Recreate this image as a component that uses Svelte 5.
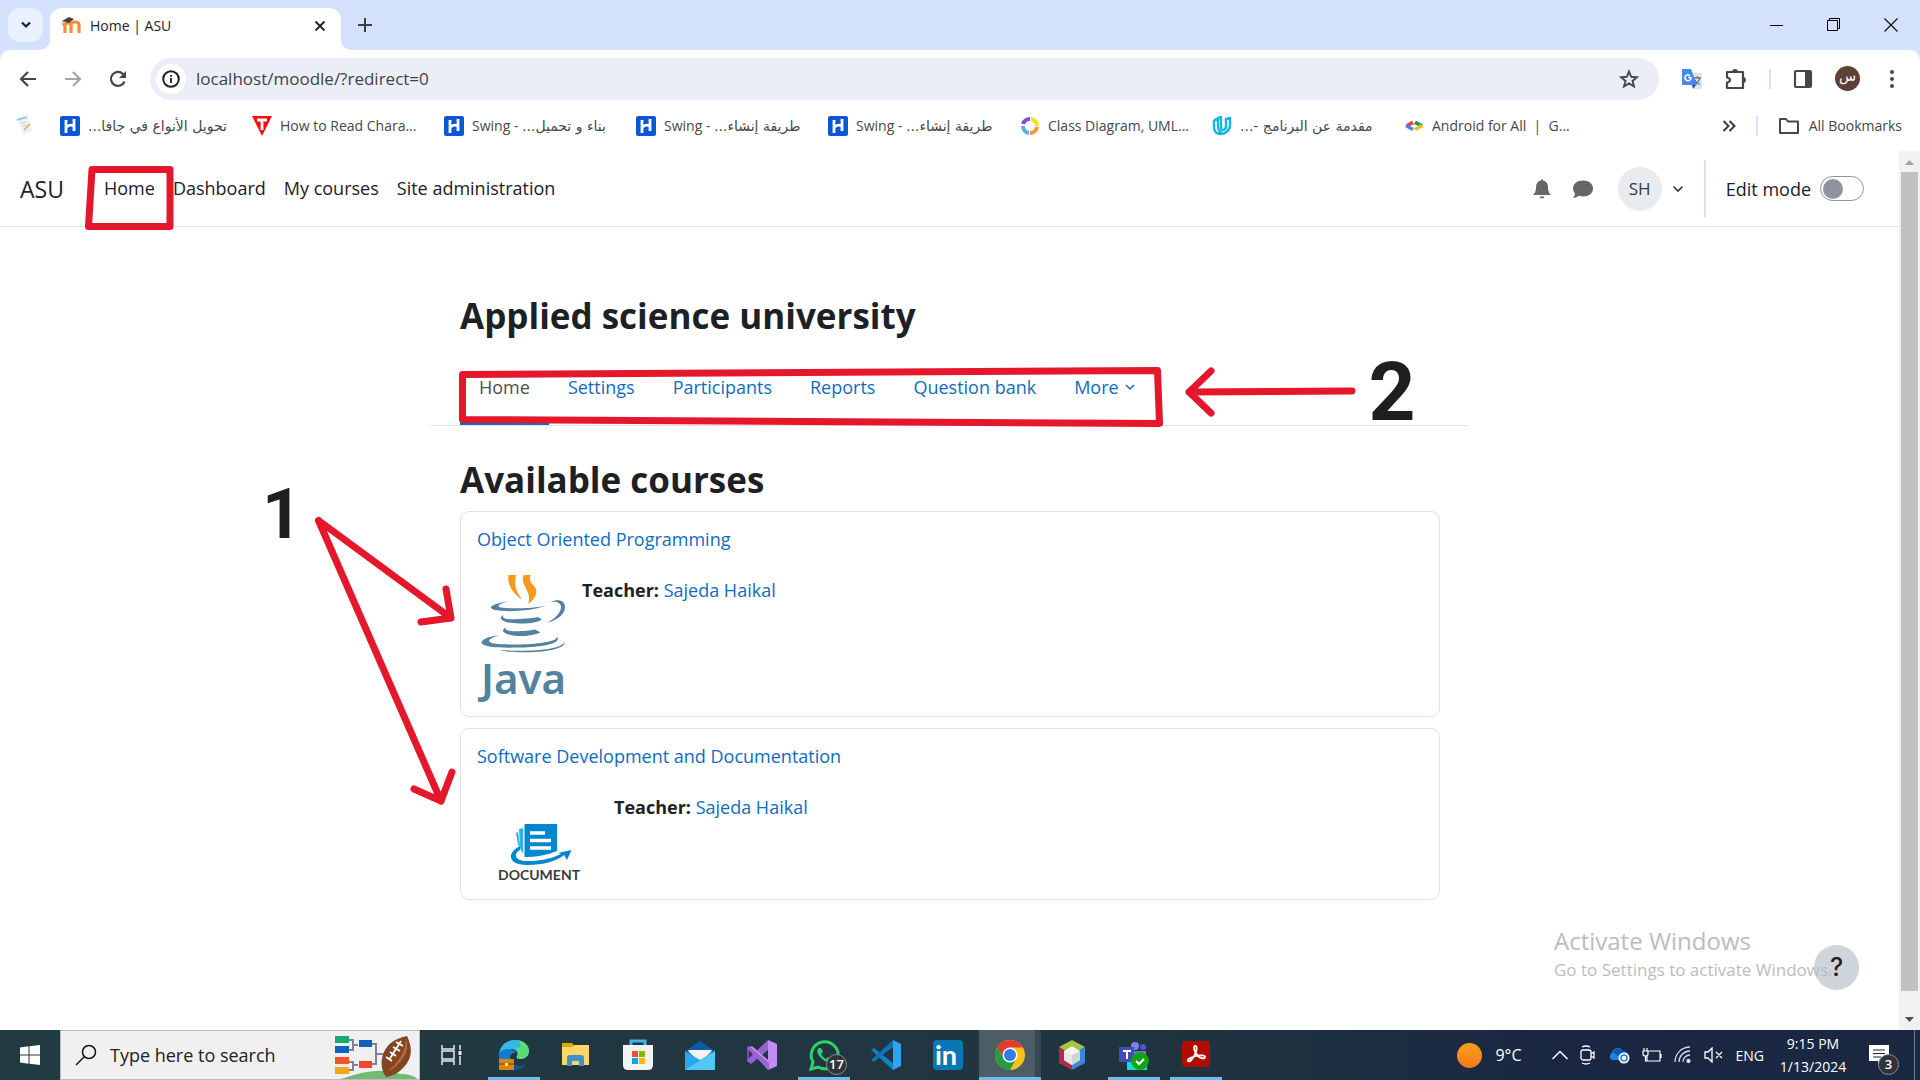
<script>
  const bookmarks = [
    { icon: 'h', rtl: 'تحويل الأنواع في جافا...' },
    { icon: 't', text: 'How to Read Chara...' },
    { icon: 'h', text: 'Swing - ', rtl: 'بناء و تحميل...' },
    { icon: 'h', text: 'Swing - ', rtl: 'طريقة إنشاء...' },
    { icon: 'h', text: 'Swing - ', rtl: 'طريقة إنشاء...' },
    { icon: 'ring', text: 'Class Diagram, UML...' },
    { icon: 'u', rtl: 'مقدمة عن البرنامج -...' },
    { icon: 'code', text: 'Android for All  |  G...' }
  ];
  const siteLinks = ['Home', 'Dashboard', 'My courses', 'Site administration'];
  const tabs = ['Home', 'Settings', 'Participants', 'Reports', 'Question bank'];
  const apps = [
    { name: 'Edge', open: true },
    { name: 'Files' },
    { name: 'Store' },
    { name: 'Mail' },
    { name: 'Visual Studio' },
    { name: 'WhatsApp', open: true },
    { name: 'VS Code' },
    { name: 'LinkedIn' },
    { name: 'Chrome', open: true, active: true },
    { name: 'NetBeans' },
    { name: 'Teams', open: true },
    { name: 'Acrobat', open: true }
  ];
  let editMode = $state(false);
  let address = $state('localhost/moodle/?redirect=0');
  let query = $state('');
</script>

{#snippet bookmarkIcon(kind)}
  <svg width="20" height="20" viewBox="0 0 20 20" aria-hidden="true">
    {#if kind === 'h'}
      <rect width="20" height="20" rx="2" fill="#0a56d8" />
      <path d="M6 4v13M14 3v12M6 11.500C9 8.500 11 8.500 14 10" fill="none" stroke="#fff" stroke-width="2.800" />
    {:else if kind === 't'}
      <path d="M0 0h20L10 20z" fill="#fb0d0d" />
      <path d="M5 4h10M10 4v10" stroke="#fff" stroke-width="2.800" />
    {:else if kind === 'ring'}
      <g fill="none" stroke-width="4">
        <path d="M10 3a7 7 0 0 0-7 5" stroke="#7a4fd0" />
        <path d="M11 3a7 7 0 0 1 6 7" stroke="#fbdc2c" />
        <path d="M17 11a7 7 0 0 1-7 6" stroke="#f09a2c" />
        <path d="M3 10a7 7 0 0 0 6 7" stroke="#55b2e4" />
      </g>
    {:else if kind === 'u'}
      <path d="M2 4v6c0 5 2 8 6 8 5 0 10-3 10-9V2l-4 1v7c0 3-1 4-3 4s-2-1-2-4V1L6 2v8c0 4 1 6 4 7M2 4l4-1" fill="none" stroke="#17b5e4" stroke-width="2.400" />
    {:else if kind === 'code'}
      <path d="M9 6.500L3 10" stroke="#ea4335" stroke-width="4" />
      <path d="M2 9.500l7 4" stroke="#4285f4" stroke-width="3.500" />
      <path d="M11 6.500l7 3.500" stroke="#0f9d58" stroke-width="4" />
      <path d="M18 9.500l-7 4" stroke="#fbbc04" stroke-width="3.500" />
      <path d="M9 8.500L6 10l3 1.500zM11 8.500l3 1.500-3 1.500z" fill="#fff" />
    {/if}
  </svg>
{/snippet}

{#snippet appIcon(name)}
  <svg class="glyph" width="32" height="32" viewBox="0 0 32 32" aria-hidden="true">
    {#if name === 'Edge'}
      <path d="M1 15C2 6 9 1 17 1c8 0 14 5 14 11 0 5-4 8-9 8-3 0-4-1-3-3 2-3-1-7-6-7-6 0-10 2-12 5z" fill="#36b8e8" />
      <path d="M19 1c7 1 12 5 12 11 0 5-4 8-9 8-3 0-4-1-3-3 2-3 0-6-2-7 6-1 8-5 2-9z" fill="#5ddb74" />
      <path d="M1 15C3 9 16 8 18 14c-5-1-7 4-5 8 3 6 11 7 15 2-3 5-7 7-12 7C7 31 0 24 1 15z" fill="#1479d1" />
      <path d="M13 22c3 6 11 7 15 2-3 5-7 7-12 7-3-2-4-6-3-9z" fill="#0e529c" />
      <rect x="1" y="20" width="15" height="11" fill="#d98411" />
      <path d="M1 25h15" stroke="#7a4104" />
      <rect x="7" y="24" width="3" height="3" fill="#ffe07a" />
    {:else if name === 'Files'}
      <path d="M2 4h10l3 3h13v4H2z" fill="#e4a50b" />
      <path d="M2 8h10l3-2h14v20H2z" fill="#ffd667" />
      <path d="M7 27V19q0-3 3-3h11q3 0 3 3v8h-5v-5h-7v5z" fill="#3f8fd2" />
    {:else if name === 'Store'}
      <path d="M9 6V2h14v4" fill="none" stroke="#3fb4f0" stroke-width="3" />
      <path d="M1 6h30v20q0 5-5 5H6q-5 0-5-5z" fill="#f2f2f2" />
      <path d="M10 12h6v6h-6z" fill="#f25022" />
      <path d="M17 12h6v6h-6z" fill="#7fba00" />
      <path d="M10 19h6v6h-6z" fill="#00a4ef" />
      <path d="M17 19h6v6h-6z" fill="#ffb900" />
    {:else if name === 'Mail'}
      <path d="M1 12L16 2l15 10v3H1z" fill="#0d5aa7" />
      <path d="M4 12h24L16 24z" fill="#f4f4f4" />
      <path d="M1 12l15 9 15-9v19H1z" fill="#2ba8ea" />
      <path d="M1 31l30-19v19z" fill="#53c8f6" />
      <path d="M4 11h24l-12 9z" fill="#f4f4f4" />
    {:else if name === 'Visual Studio'}
      <path d="M1 9l4-2 18 17v7L3 12v11l-2-1z" fill="#7b4bb5" />
      <path d="M1 22l4 3L22 11V1L3 19z" fill="#9563cf" />
      <path d="M22 1l9 4v22l-9 4L3 9l3-2 16 14z" fill="#c48cf3" />
      <path d="M3 7l20 17v7L1 9z" fill="#9a63d0" />
    {:else if name === 'WhatsApp'}
      <path d="M3 30l2-7a13.500 13.500 0 1 1 5 5z" fill="none" stroke="#2bd366" stroke-width="3" />
      <path d="M11 9c-3 2-2 6 2 10s9 6 11 2l-4-3-2 2c-2-1-4-3-5-5l2-2-2-4z" fill="#2bd366" />
    {:else if name === 'VS Code'}
      <path d="M1 11l3-2 19 15v7z" fill="#1181c8" />
      <path d="M1 21l3 2L23 8V1z" fill="#0f72b5" />
      <path d="M23 1l8 4v22l-8 4z" fill="#2ba6f2" />
    {:else if name === 'LinkedIn'}
      <rect x="1" y="1" width="30" height="30" rx="4" fill="#0a77b5" />
      <text x="3" y="26" class="linkedin">in</text>
    {:else if name === 'Chrome'}
      <circle cx="16" cy="16" r="15" fill="#fbc116" />
      <path d="M3 8.500A15 15 0 0 1 29 8.500H16L9 18z" fill="#e33b2e" />
      <path d="M3 8.500A15 15 0 0 0 16 31l6-11-12-1z" fill="#2a9a48" />
      <circle cx="16" cy="16" r="7.500" fill="#fff" />
      <circle cx="16" cy="16" r="6" fill="#2f7de9" />
    {:else if name === 'NetBeans'}
      <path d="M16 1l13 7-13 8L3 8z" fill="#a9c23f" />
      <path d="M3 8l13 8v15L3 24z" fill="#b22a50" />
      <path d="M29 8l-13 8v15l13-7z" fill="#3f86d0" />
      <path d="M16 7l8 5v9l-8 5-8-5v-9z" fill="#f4f6f0" />
      <path d="M16 16l8-4v9l-8 5z" fill="#cfd4d6" />
      <path d="M16 16l-8-4v9l8 5z" fill="#e6e8e6" />
    {:else if name === 'Teams'}
      <circle cx="17" cy="7" r="4" fill="#7b83eb" />
      <circle cx="25" cy="8" r="3" fill="#5059c9" />
      <path d="M10 12h18v10q-3 6-9 6t-9-6z" fill="#6f76df" />
      <rect x="1" y="8" width="15" height="15" fill="#444bbb" />
      <path d="M5 12h8M9 12v8" stroke="#fff" stroke-width="2" />
      <rect x="9" y="23" width="20" height="8" fill="#19d8d8" />
      <circle cx="22" cy="22" r="9" fill="#14a312" />
      <path d="M18 22l3 3 5-5" fill="none" stroke="#fff" stroke-width="2" />
    {:else}
      <rect x="2" y="2" width="28" height="26" rx="4" fill="#b30b00" />
      <path d="M15 7c-2 0-1 6 3 10 3 3 7 3 7 1s-5-2-9-1-9 3-8 5c2 2 6-4 8-9 1-4 1-6-1-6z" fill="none" stroke="#fff" stroke-width="1.800" />
    {/if}
  </svg>
{/snippet}

<div class="screen">
  <header class="browser">
    <div class="tabstrip">
      <button class="tabsearch" aria-label="Search tabs">
        <svg width="12" height="12" viewBox="0 0 12 12"><path d="M2 3.500l4 4 4-4" fill="none" stroke="#1f1f1f" stroke-width="2.200" /></svg>
      </button>
      <div class="tab">
        <svg class="flare left" width="12" height="12" viewBox="0 0 12 12"><path d="M12 0v12H0Q12 12 12 0z" fill="#fff" /></svg>
        <svg width="20" height="20" viewBox="0 0 20 20">
          <path d="M4 17V9q0-2 3-2t3 2v8M10 9q0-3 4-3t4 3v8" fill="none" stroke="#f68b32" stroke-width="3.200" />
          <path d="M1 5l7-4 5 2-5 4z" fill="#46423f" />
          <path d="M2 5v5" stroke="#8d8580" />
        </svg>
        <span class="tabtitle">Home | ASU</span>
        <button class="plain" aria-label="Close tab">
          <svg width="12" height="12" viewBox="0 0 12 12"><path d="M1.500 1.500l9 9M10.500 1.500l-9 9" stroke="#1f1f1f" stroke-width="1.800" /></svg>
        </button>
        <svg class="flare right" width="12" height="12" viewBox="0 0 12 12"><path d="M0 0v12h12Q0 12 0 0z" fill="#fff" /></svg>
      </div>
      <button class="plain newtab" aria-label="New tab">
        <svg width="14" height="14" viewBox="0 0 14 14"><path d="M7 0v14M0 7h14" stroke="#3c4043" stroke-width="2" /></svg>
      </button>
      <div class="windowctl">
        <button class="plain" aria-label="Minimize"><svg width="14" height="14" viewBox="0 0 14 14"><path d="M0 7.500h13" stroke="#000" /></svg></button>
        <button class="plain" aria-label="Restore"><svg width="14" height="14" viewBox="0 0 14 14"><path d="M.5 2.500h10v10H.5zM2.500 2.500V.5h10v10h-2" fill="none" stroke="#000" /></svg></button>
        <button class="plain" aria-label="Close"><svg width="14" height="14" viewBox="0 0 14 14"><path d="M.5.5l13 13M13.500.5l-13 13" stroke="#111" stroke-width="1.200" /></svg></button>
      </div>
    </div>

    <div class="toolbar">
      <button class="plain tool" aria-label="Back"><svg width="18" height="18" viewBox="0 0 18 18"><path d="M17 9H2M9 2L2 9l7 7" fill="none" stroke="#474747" stroke-width="2.200" /></svg></button>
      <button class="plain tool" aria-label="Forward"><svg width="18" height="18" viewBox="0 0 18 18"><path d="M1 9h15M9 2l7 7-7 7" fill="none" stroke="#a5a5a5" stroke-width="2.200" /></svg></button>
      <button class="plain tool" aria-label="Reload"><svg width="18" height="18" viewBox="0 0 18 18"><path d="M15.500 11.500A7 7 0 1 1 14 4l1.500 2" fill="none" stroke="#474747" stroke-width="2.200" /><path d="M17 1v7h-7z" fill="#474747" /></svg></button>
      <div class="omnibox">
        <button class="siteinfo" aria-label="Site information">
          <svg width="18" height="18" viewBox="0 0 18 18"><circle cx="9" cy="9" r="7.800" fill="none" stroke="#1f1f1f" stroke-width="2" /><path d="M9 8v5M9 5v1.800" stroke="#1f1f1f" stroke-width="1.800" /></svg>
        </button>
        <input class="address" aria-label="Address" bind:value={address} />
        <button class="plain" aria-label="Bookmark this page"><svg width="20" height="20" viewBox="0 0 20 20"><path d="M10 2.500l2.200 5.300 5.800.4-4.500 3.700 1.500 5.600-5-3.100-5 3.100 1.500-5.600L2 8.200l5.800-.4z" fill="none" stroke="#474747" stroke-width="1.900" /></svg></button>
      </div>
      <div class="extensions">
        <button class="plain" aria-label="Translate">
          <svg width="22" height="22" viewBox="0 0 22 22"><path d="M9 5h12v16H13z" fill="#e2e3e6" /><path d="M13 10h7M16.500 8v2M19 10q-2 5-5 6M14 12q2 4 5 4" fill="none" stroke="#647b86" stroke-width="1.300" /><path d="M11 17h4l-3 4z" fill="#3b3fb5" /><path d="M1 1h9l6 16H2q-1 0-1-1z" fill="#4587f3" /><path d="M9 7.500A3 3 0 1 0 10 9.500H7" fill="none" stroke="#fff" stroke-width="1.600" /></svg>
        </button>
        <button class="plain" aria-label="Extensions">
          <svg width="22" height="22" viewBox="0 0 22 22"><path d="M2 4h16v16H2v-5.500q3-.5 3-2.500T2 9.500z" fill="none" stroke="#474747" stroke-width="2.200" stroke-linejoin="round" /><path d="M7 4a3 3 0 0 1 6 0zM18 9a3 3 0 0 1 0 6z" fill="#474747" /></svg>
        </button>
        <span class="bar"></span>
        <button class="plain" aria-label="Side panel"><svg width="20" height="20" viewBox="0 0 20 20"><rect x="2" y="2" width="16" height="16" rx="1" fill="none" stroke="#474747" stroke-width="2.200" /><path d="M12 2h6v16h-6z" fill="#474747" /></svg></button>
        <button class="profile" aria-label="Profile">س</button>
        <button class="plain" aria-label="Menu"><svg width="20" height="20" viewBox="0 0 20 20" fill="#474747"><circle cx="10" cy="3" r="2" /><circle cx="10" cy="10" r="2" /><circle cx="10" cy="17" r="2" /></svg></button>
      </div>
    </div>

    <nav class="bookmarks" aria-label="Bookmarks">
      <a class="bare" href="#notes" aria-label="Notes">
        <svg width="20" height="20" viewBox="0 0 20 20"><path d="M3 5l11-3 3 13-9 4z" fill="#eef0f1" /><path d="M2 4l10-3" stroke="#8dcbe8" stroke-width="2" /><path d="M9 14l6-6" stroke="#c9ab74" stroke-width="1.500" /><path d="M6 7l5-1M7 10l4-1" stroke="#c5cbd0" /></svg>
      </a>
      {#each bookmarks as b}
        <a class="bookmark" href="#bookmark">
          {@render bookmarkIcon(b.icon)}
          <span class="label">{b.text ?? ''}{#if b.rtl}<bdi class="arabic" dir="rtl">{b.rtl}</bdi>{/if}</span>
        </a>
      {/each}
      <div class="morebooks">
        <button class="plain" aria-label="More bookmarks"><svg width="14" height="12" viewBox="0 0 14 12"><path d="M1.500 1l5 5-5 5M7.500 1l5 5-5 5" fill="none" stroke="#3c3c3c" stroke-width="2" /></svg></button>
        <span class="bar"></span>
        <button class="plain folder"><svg width="22" height="18" viewBox="0 0 22 18"><path d="M2 2h6l2 2.500h10V16H2z" fill="none" stroke="#474747" stroke-width="2" stroke-linejoin="round" /></svg>All Bookmarks</button>
      </div>
    </nav>
  </header>

  <div class="viewport">
    <div class="page">
      <nav class="navbar" aria-label="Site">
        <a class="brand" href="#site">ASU</a>
        <div class="sitelinks">
          {#each siteLinks as link}<a href="#{link}">{link}</a>{/each}
        </div>
        <div class="usertools">
          <button class="plain" aria-label="Notifications"><svg width="20" height="22" viewBox="0 0 20 22"><path d="M10 1q1 0 1 1.500 5 1 5 7 0 5 3 7.500H1q3-2.500 3-7.500 0-6 5-7Q9 1 10 1zM7.500 18.500h5q-.5 2-2.500 2t-2.500-2z" fill="#666" /></svg></button>
          <button class="plain" aria-label="Messages"><svg width="22" height="20" viewBox="0 0 22 20"><path d="M11 1.500c6 0 10 3.500 10 8s-4 8-10 8q-2 0-4-.8Q4 19 1 19q2-2 2-4.500Q1 12.500 1 9.500c0-4.500 4-8 10-8z" fill="#666" /></svg></button>
          <button class="user" aria-label="User menu"><span class="initials">SH</span><svg width="12" height="8" viewBox="0 0 12 8"><path d="M1.500 1.500L6 6l4.500-4.500" fill="none" stroke="#333" stroke-width="1.600" /></svg></button>
        </div>
        <label class="edit">Edit mode <input type="checkbox" role="switch" bind:checked={editMode} /></label>
        <svg class="mark" width="100" height="76" viewBox="0 0 100 76" aria-hidden="true">
          <path d="M8 18.500h78v57H4.500z" class="pen" />
        </svg>
      </nav>

      <main class="content">
        <h1>Applied science university</h1>
        <nav class="tabs" aria-label="Course">
          {#each tabs as tab, i}<a href="#{tab}" class:current={i === 0}>{tab}</a>{/each}
          <a href="#More">More<svg width="10" height="8" viewBox="0 0 10 8"><path d="M1 2l4 4 4-4" fill="none" stroke="#0f6cbf" stroke-width="1.500" /></svg></a>
        </nav>

        <section class="courses">
          <h2>Available courses</h2>
          <article class="card">
            <h3><a href="#oop">Object Oriented Programming</a></h3>
            <div class="summary">
              <svg class="logo" width="97" height="127" viewBox="477 575 97 127" role="img" aria-label="Java">
                <g fill="#f8981d">
                  <path d="M508.500 575C507 586 514 594 522.500 600 516 592 514 586 516 575z" />
                  <path d="M523.500 575C520 586 532 590 528.500 604 537 597 539 590 533 585 530 582 529.500 579 530.500 575z" />
                </g>
                <g fill="#5382a1">
                  <path d="M508 601.500C496 603 490 606 491 608 495 613 530 612 546 605.500 532 609 505 609 499 607 497 605 502 603 508 601.500z" />
                  <path d="M550 602C559 598 565 601 565 607 565 614 558 620 547.500 622.500 556 618 561 612 561 607 561 603 557 601 550 602z" />
                  <path d="M504 615C496 618 503 623.500 520 623.500 532 623.500 538 622 542 619.500L538 617C528 619 510 620 505 618.500 502 617.500 503 616 504 615z" />
                  <path d="M506 627.500C498 631 507 636 521 636 530 636 537 634 540.500 632.500L535 629.500C528 631 514 632 508 630.500 506 630 505 629 506 627.500z" />
                  <path d="M499 635.500C488 636 481 640 481.500 643 484 647.500 500 648 520 647.500 545 647 562 643 557 636.500 558 642 535 644.500 518 644.500 500 644.500 490 644 489 641 489 639 494 636.500 499 635.500z" />
                  <path d="M499 650C515 654.500 565 653 565 642 560 650 530 652 499 650z" />
                </g>
                <text x="481" y="694" class="javaword">Java</text>
              </svg>
              <p><strong>Teacher:</strong> <a href="#teacher">Sajeda Haikal</a></p>
            </div>
          </article>
          <article class="card">
            <h3><a href="#sdd">Software Development and Documentation</a></h3>
            <div class="summary">
              <svg class="logo" width="129" height="93" viewBox="477 792 129 93" role="img" aria-label="Document">
                <path d="M516 833l2-1 2 15-2-2zM519 829l4-1v26l-3-6z" fill="#24b4ef" />
                <path d="M524.500 824H557v27q-14 6-32.500 6z" fill="#0486d1" />
                <path d="M530 833h15M530 840.500h21M530 848h21" stroke="#fff" stroke-width="3.500" />
                <path d="M520 846C506 853 508 865 527 865 544 865 557 861 564 855L567 860 571.500 850 558 853 561 854C548 860 538 861 528 861 516 861 512 855 520 850z" fill="#0486d1" />
                <text x="498" y="880" class="docword">DOCUMENT</text>
              </svg>
              <p><strong>Teacher:</strong> <a href="#teacher">Sajeda Haikal</a></p>
            </div>
          </article>
        </section>

        <svg class="mark" width="1037" height="803" viewBox="431 227 1037 803" aria-hidden="true">
          <path d="M462.500 374.500L1157.500 370.500l2 53-697-4z" class="pen" />
          <path d="M1352 391l-163 1M1211 371l-22 21 22 21" class="pen" />
          <path d="M318.500 520.500L451 618M446 589l5 29-30 4M318.500 520.500L441 801M414 789l27 12 11-29" class="pen" />
          <text x="282" y="538" class="step">1</text>
          <text x="1392" y="420" class="step two">2</text>
        </svg>
      </main>

      <button class="help" aria-label="Help">?</button>
      <div class="watermark">
        <strong>Activate Windows</strong>
        <span>Go to Settings to activate Windows.</span>
      </div>
    </div>
    <div class="scrollbar" aria-hidden="true">
      <svg width="21" height="21" viewBox="0 0 21 21"><path d="M6 14h9l-4.500-5z" fill="#a3a3a3" /></svg>
      <span class="thumb"></span>
      <svg width="21" height="21" viewBox="0 0 21 21"><path d="M6 8h9l-4.500 5z" fill="#505050" /></svg>
    </div>
  </div>

  <footer class="taskbar">
    <button class="start" aria-label="Start"><svg width="20" height="20" viewBox="0 0 20 20" fill="#fff"><path d="M0 2.500l8.500-1.200v8.200H0zM9.500 1.200L20 0v9.500H9.500zM0 10.500h8.500v8.200L0 17.500zM9.500 10.500H20V20L9.500 18.800z" /></svg></button>
    <label class="search">
      <svg width="22" height="22" viewBox="0 0 22 22"><circle cx="14" cy="8" r="6.500" fill="none" stroke="#111" stroke-width="1.500" /><path d="M9.500 12.500L1 21" stroke="#111" stroke-width="1.500" /></svg>
      <input placeholder="Type here to search" aria-label="Type here to search" bind:value={query} />
      <svg class="scene" width="86" height="48" viewBox="333 1031 86 48">
        <path d="M338 1080q40-15 62-6 14 0 18 6z" fill="#6fba75" />
        <path d="M349 1040h4v10h-4M353 1045h5M349 1062h4v8h-4M353 1065h5M372 1044h4v20h-4M376 1054h8" fill="none" stroke="#85809a" stroke-width="2" />
        <rect x="335" y="1036" width="14" height="7" fill="#17a878" /><rect x="335" y="1046" width="14" height="7" fill="#0e62be" />
        <rect x="335" y="1057" width="14" height="7" fill="#f4502a" /><rect x="335" y="1067" width="14" height="7" fill="#f2a51f" />
        <rect x="359" y="1040" width="13" height="7" fill="#0e62be" /><rect x="359" y="1061" width="13" height="7" fill="#f2452c" />
        <path d="M407 1036q9 18-3 31-8 9-18 10-6-8-4-19 4-18 25-22z" fill="#844522" />
        <path d="M406 1038q4 12-5 23-7 8-13 10 11-9 15-19 3-7 3-14z" fill="#ad6a3f" />
        <path d="M401 1041l-12 19M396 1042l7 4M393 1047l7 4M390 1052l6 4M386 1057l6 4" stroke="#fff" stroke-width="1.800" />
      </svg>
    </label>
    <button class="app" aria-label="Task view"><svg width="22" height="20" viewBox="0 0 22 20" fill="none" stroke="#e8ecee" stroke-width="1.500"><path d="M1 0v4h12V0M1 20v-4h12v4M1 6h12v8H1zM19 0v5M19 11v9" /><path d="M19 6v4" stroke-width="3" /></svg></button>
    {#each apps as app}
      <button class="app" class:open={app.open} class:active={app.active} aria-label={app.name}>
        {@render appIcon(app.name)}
        {#if app.name === 'WhatsApp'}<span class="badge unread">17</span>{/if}
      </button>
    {/each}
    <div class="tray">
      <button class="weather"><span class="sun"></span>9°C</button>
      <svg width="16" height="10" viewBox="0 0 16 10"><path d="M.5 9L8 1.500 15.500 9" fill="none" stroke="#fff" stroke-width="1.500" /></svg>
      <svg width="16" height="20" viewBox="0 0 16 20" fill="none" stroke="#fff" stroke-width="1.300"><rect x="1" y="5" width="10" height="10" rx="2" /><path d="M11 9l3-2v6l-3-2M2 2q4-2 8 0M2 18q4 2 8 0" /></svg>
      <svg width="22" height="18" viewBox="0 0 22 18"><path d="M4 14a4 4 0 0 1 0-7 6 6 0 0 1 11-2 5 5 0 0 1 3 9z" fill="#1489e0" /><path d="M5 6a6 6 0 0 1 10-1l2 1-7 4z" fill="#0b57b0" /><circle cx="16" cy="12" r="5.500" fill="#fff" /><circle cx="16" cy="12" r="3" fill="none" stroke="#1f7fd0" stroke-width="1.500" /></svg>
      <svg width="20" height="16" viewBox="0 0 20 16" fill="none" stroke="#fff" stroke-width="1.200"><path d="M6 4h12v10H5V9M19 7v4M1 4h5v3q0 2-2.500 2T1 7zM2 1v3M5 1v3M3.500 9v5H5" /></svg>
      <svg width="18" height="18" viewBox="0 0 18 18" fill="none" stroke="#d5d9e2" stroke-width="1.300"><path d="M1 16A15 15 0 0 1 16 1M5 16A11 11 0 0 1 16 5M9 16a7 7 0 0 1 7-7" /><circle cx="14.500" cy="15" r="1.500" fill="#fff" /></svg>
      <svg width="20" height="16" viewBox="0 0 20 16" fill="none" stroke="#fff" stroke-width="1.300"><path d="M1 5h3l4-4v14l-4-4H1zM12 5l6 6M18 5l-6 6" /></svg>
      <span class="lang">ENG</span>
      <time class="clock"><span>9:15 PM</span><span>1/13/2024</span></time>
      <button class="notices" aria-label="Notifications"><svg width="20" height="20" viewBox="0 0 20 20"><path d="M0 0h20v16h-7l-4 4v-4H0z" fill="#fff" /><path d="M4 5h12M4 8.500h12M4 12h8" stroke="#1b2842" stroke-width="1.200" /></svg><span class="badge">3</span></button>
      <span class="peek"></span>
    </div>
  </footer>
</div>

<style>
  :global(body) { background: #fff; }
  :global(*) { box-sizing: border-box; }
  .screen {
    min-height: 100vh; display: flex; flex-direction: column; overflow: hidden;
    font-family: "Open Sans", "Noto Sans", "DejaVu Sans", sans-serif; font-size: 18px; color: #1d2125;
  }
  a { color: #0f6cbf; text-decoration: none; }
  button { font: inherit; color: inherit; border: 0; background: none; padding: 0; margin: 0; }
  svg { display: block; flex: none; }
  h1, h2, h3, p { margin: 0; }
  input { font: inherit; border: 0; outline: 0; background: none; padding: 0; min-width: 0; }
  .plain { display: flex; align-items: center; justify-content: center; }

  .tabstrip { height: 50px; background: #d3e1fd; display: flex; align-items: flex-end; padding-left: 8px; }
  .tabsearch { width: 35px; height: 34px; border-radius: 12px; background: #eaf1fe; display: grid; place-items: center; align-self: center; }
  .tab { position: relative; width: 291px; height: 42px; margin-left: 7px; background: #fff; border-radius: 12px 12px 0 0; display: flex; align-items: center; padding: 0 15px 6px 11px; gap: 9px; }
  .flare { position: absolute; bottom: 0; }
  .flare.left { left: -12px; }
  .flare.right { right: -12px; }
  .tabtitle { flex: 1; font-size: 14px; line-height: 20px; }
  .newtab { width: 48px; align-self: center; }
  .windowctl { margin-left: auto; display: flex; align-self: center; gap: 43px; padding-right: 22px; }

  .browser { background: #d3e1fd; }
  .toolbar { height: 57px; display: flex; align-items: center; padding: 0 18px 0 19px; background: #fff; border-radius: 10px 10px 0 0; }
  .tool { width: 18px; margin-right: 27px; }
  .omnibox { flex: 1; height: 42px; margin-left: -4px; border-radius: 21px; background: #ebeef7; display: flex; align-items: center; padding: 0 20px 0 6px; }
  .siteinfo { width: 30px; height: 30px; border-radius: 50%; background: #fff; display: grid; place-items: center; margin-right: 10px; }
  .address { flex: 1; font-size: 17px; line-height: 24px; color: #3f4247; }
  .extensions { display: flex; align-items: center; gap: 22px; padding-left: 22px; }
  .bar { width: 2px; height: 20px; background: #d3e1fd; }
  .profile { width: 25px; height: 25px; border-radius: 50%; background: #5d4037; color: #fff; font: 14px/20px "DejaVu Sans", sans-serif; padding-bottom: 5px; }

  .bookmarks { height: 44px; display: flex; align-items: center; padding: 0 18px 6px 15px; font-size: 14px; line-height: 20px; color: #45474a; background: #fff; }
  .bare { margin-right: 25px; }
  .bookmark { display: flex; align-items: center; gap: 8px; margin-right: 24px; color: inherit; }
  .label { width: 140px; white-space: pre; }
  .arabic { font: 14px/20px "DejaVu Sans", sans-serif; }
  .morebooks { margin-left: auto; display: flex; align-items: center; gap: 20px; }
  .folder { gap: 9px; }

  .viewport { flex: 1; display: flex; }
  .page { flex: 1; position: relative; min-width: 0; }
  .navbar { position: relative; height: 76px; border-bottom: 1px solid #dee2e6; display: flex; align-items: center; padding: 0 35px 0 20px; line-height: 28px; }
  .brand { font-size: 23px; color: #1d2125; width: 84px; }
  .sitelinks { display: flex; gap: 18px; padding-bottom: 2px; }
  .sitelinks a { color: #1d2125; }
  .usertools { margin-left: auto; display: flex; align-items: center; gap: 20px; height: 57px; padding-right: 20px; border-right: 2px solid #dee2e6; }
  .user { display: flex; align-items: center; gap: 10px; margin-left: 4px; }
  .initials { width: 44px; height: 44px; border-radius: 50%; background: #e9ecef; color: #343a40; display: grid; place-items: center; font-size: 17px; }
  .edit { display: flex; align-items: center; gap: 9px; padding-left: 20px; }
  .edit input { appearance: none; width: 44px; height: 25px; margin: 0; border: 1px solid #8f959e; border-radius: 13px; background: #fff; display: flex; align-items: center; padding: 2px; }
  .edit input::before { content: ""; width: 20px; height: 20px; border-radius: 50%; background: #8f959e; }
  .edit input:checked::before { margin-left: auto; }
  .mark { position: absolute; top: 0; overflow: visible; pointer-events: none; }
  .navbar .mark { left: 84px; }
  .pen { fill: none; stroke: #e5182b; stroke-width: 7px; stroke-linejoin: round; stroke-linecap: round; }
  .step { font: bold 70px Roboto, "Liberation Sans", sans-serif; fill: #1f1f1f; text-anchor: middle; }
  .two { font-size: 82px; }

  .content { position: relative; max-width: 1037px; margin: 0 auto; padding-top: 67px; }
  .content .mark { left: 0; }
  h1, h2 { font-size: 35px; line-height: 44px; padding: 0 29px; }
  .tabs { margin-top: 35px; padding: 0 29px; display: flex; border-bottom: 1px solid #dee2e6; line-height: 28px; }
  .tabs a { padding: 0 19px 21px; border-bottom: 3px solid transparent; display: flex; align-items: center; gap: 6px; }
  .tabs .current { color: #495057; border-color: #0f6cbf; }
  .courses { padding: 33px 28px 0 29px; display: flex; flex-direction: column; gap: 11px; }
  h2 { padding: 0; line-height: 41px; }
  .card { border: 1px solid #dee2e6; border-radius: 9px; padding: 13px 16px 14px; }
  h3 { font-size: 18px; font-weight: 400; line-height: 28px; margin-bottom: 22px; }
  .summary { display: flex; gap: 8px; }
  .summary p { line-height: 30px; }
  .logo { overflow: visible; }
  .javaword { font: 600 42px "Noto Sans", "Open Sans", sans-serif; fill: #5382a1; }
  .docword { font: bold 14px Lato, sans-serif; fill: #3c3c3c; }

  .help { position: absolute; right: 40px; bottom: 40px; width: 45px; height: 45px; border-radius: 50%; background: #ced4da; font: 500 25px/45px Inter, sans-serif; }
  .watermark { position: absolute; right: 54px; bottom: 46px; width: 291px; color: #bcbcbc; display: flex; flex-direction: column; line-height: 29px; white-space: nowrap; }
  .watermark strong { font-size: 24px; font-weight: 400; }
  .watermark span { font-size: 17px; }
  .scrollbar { width: 21px; background: #f1f1f1; display: flex; flex-direction: column; }
  .thumb { flex: 1; margin: 0 2px 18px; background: #c1c1c1; }

  .taskbar { height: 50px; background: linear-gradient(90deg, #223a42, #20343f 60%, #1a2742 80%, #1b2842); color: #fff; display: flex; align-items: stretch; }
  .start { width: 60px; display: grid; place-items: center; }
  .search { width: 360px; background: #f0f0f0; border: 1px solid #b9bcbe; display: flex; align-items: center; padding-left: 14px; margin-right: 1px; }
  .search input { flex: 1; margin-left: 13px; color: #222; }
  .search input::placeholder { color: #222; opacity: 1; }
  .app { position: relative; width: 62px; display: grid; place-items: center; }
  .app.open::after { content: ""; position: absolute; left: 5px; right: 5px; bottom: 0; height: 3px; background: #76b9ed; }
  .app.active { background: linear-gradient(90deg, #4d5d65 56px, #36474f 56px); }
  .app.active::after { left: 0; right: 0; }
  .glyph { overflow: visible; }
  .badge { position: absolute; width: 21px; height: 21px; border-radius: 50%; background: #30343a; border: 1px solid #8b9096; color: #fff; font-size: 13px; font-weight: 600; line-height: 18px; text-align: center; }
  .unread { right: 8px; bottom: 5px; }
  .tray { margin-left: auto; display: flex; align-items: center; gap: 12px; font-size: 15px; }
  .weather { display: flex; align-items: center; gap: 13px; font-size: 16px; margin-right: 18px; }
  .sun { width: 25px; height: 25px; border-radius: 50%; background: linear-gradient(#f9a11b, #f3781f); }
  .lang { font-size: 14px; }
  .clock { width: 74px; display: flex; flex-direction: column; text-align: center; font-size: 14px; line-height: 23px; white-space: nowrap; }
  .notices { position: relative; margin: 0 13px 0 7px; }
  .notices .badge { left: 9px; top: 9px; }
  .peek { width: 6px; align-self: stretch; border-left: 1px solid #6f7889; }
  .linkedin { font: bold 27px Lato, "Open Sans", sans-serif; fill: #fff; }
</style>
